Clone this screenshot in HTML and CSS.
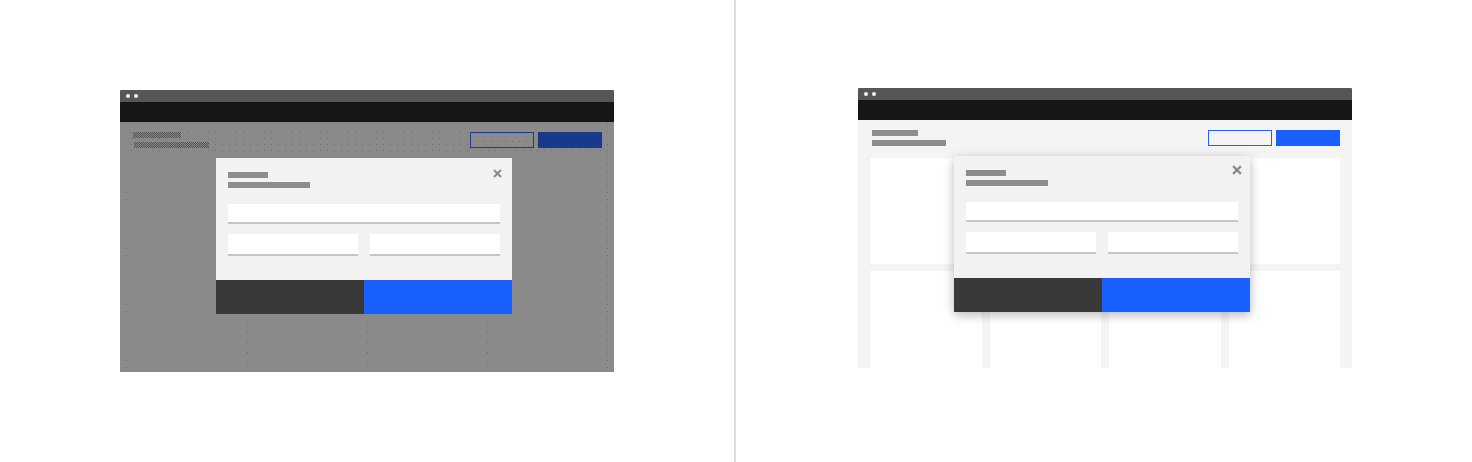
FILE: index.html
```html
<!DOCTYPE html>
<html lang="en">
<head>
<meta charset="utf-8">
<title>Modal states</title>
<link rel="stylesheet" href="styles.css">
</head>
<body>
<div class="stage">
  <section class="panel panel-left">
    <div class="frame">
      <div class="titlebar"><span class="dot"></span><span class="dot"></span></div>
      <div class="navbar"></div>
      <div class="content content-dim">
        <div class="page-head head-dim">
          <div class="titles titles-dim"><span class="bar bar-a"></span><span class="bar bar-b"></span></div>
          <div class="actions"><span class="btn btn-ghost-dim"></span><span class="btn btn-primary-dim"></span></div>
        </div>
      </div>
      <div class="modal">
        <div class="modal-body">
          <div class="titles"><span class="bar bar-c"></span><span class="bar bar-d"></span></div>
          <svg class="close" viewBox="0 0 9 9" aria-hidden="true"><path d="M1 1L8 8M8 1L1 8"/></svg>
          <div class="fields">
            <div class="field"></div>
            <div class="field-row"><div class="field"></div><div class="field"></div></div>
          </div>
        </div>
        <div class="modal-foot"><span class="btn-secondary"></span><span class="btn-submit"></span></div>
      </div>
    </div>
  </section>
  <div class="divider"></div>
  <section class="panel panel-right">
    <div class="frame">
      <div class="titlebar"><span class="dot"></span><span class="dot"></span></div>
      <div class="navbar"></div>
      <div class="content content-live">
        <div class="page-head">
          <div class="titles titles-live"><span class="bar bar-a"></span><span class="bar bar-b"></span></div>
          <div class="actions"><span class="btn btn-ghost"></span><span class="btn btn-primary"></span></div>
        </div>
        <div class="cards">
          <div class="card card-wide"></div>
          <div class="card card-wide"></div>
          <div class="card"></div>
          <div class="card"></div>
          <div class="card"></div>
          <div class="card"></div>
        </div>
      </div>
      <div class="modal modal-raised">
        <div class="modal-body">
          <div class="titles"><span class="bar bar-c"></span><span class="bar bar-d"></span></div>
          <svg class="close close-raised" viewBox="0 0 9 9" aria-hidden="true"><path d="M1 1L8 8M8 1L1 8"/></svg>
          <div class="fields">
            <div class="field"></div>
            <div class="field-row"><div class="field"></div><div class="field"></div></div>
          </div>
        </div>
        <div class="modal-foot"><span class="btn-secondary"></span><span class="btn-submit"></span></div>
      </div>
    </div>
  </section>
</div>
</body>
</html>
```
FILE: styles.css
```css
* { box-sizing: border-box; margin: 0; padding: 0; }
html, body { background: #ffffff; }
body {
  width: 1472px;
  height: 462px;
  overflow: hidden;
  font-family: "Liberation Sans", Arial, sans-serif;
}
.stage { display: flex; height: 462px; }
.panel-left { width: 734px; padding: 90px 0 0 120px; }
.divider { width: 2px; height: 462px; background: #dddddd; }
.panel-right { flex: 1; padding: 88px 0 0 122px; }

.frame { position: relative; width: 494px; }
.titlebar {
  height: 12px;
  background: #565656;
  display: flex;
  align-items: center;
  gap: 4px;
  padding-left: 6px;
  border-radius: 1px 1px 0 0;
}
.dot { width: 4px; height: 4px; border-radius: 50%; background: #f2f2f2; }
.navbar { height: 20px; background: #161616; }

.content { overflow: hidden; }
.content-live { height: 248px; background: #f4f4f4; padding: 10px 12px 0; }
.content-dim {
  height: 250px;
  padding: 5px 4px 0 5px;
  background-color: #8a8a8a;
  background-image:
    repeating-linear-gradient(to bottom, #6c6c6c 0 1px, transparent 1px 7px),
    repeating-linear-gradient(to bottom, #6c6c6c 0 1px, transparent 1px 7px),
    repeating-linear-gradient(to bottom, #6c6c6c 0 1px, transparent 1px 10px),
    repeating-linear-gradient(to bottom, #6c6c6c 0 1px, transparent 1px 10px),
    repeating-linear-gradient(to bottom, #6c6c6c 0 1px, transparent 1px 10px);
  background-size: 1px 100%;
  background-repeat: no-repeat;
  background-position: 6px 0, 487px 0, 127px 200px, 247px 200px, 367px 200px;
}

.page-head { display: flex; justify-content: space-between; align-items: flex-start; }
.head-dim {
  height: 29px;
  padding: 5px 8px;
  background-color: #6e6e6e;
  background-image:
    linear-gradient(90deg, #8a8a8a 6px, transparent 6px),
    linear-gradient(#8a8a8a 5px, transparent 5px);
  background-size: 7px 6px, 7px 6px;
}

.titles { display: flex; flex-direction: column; gap: 4px; }
.titles-live { padding-left: 2px; }
.bar { display: block; height: 6px; background: #8d8d8d; }
.bar-a { width: 46px; }
.bar-b { width: 74px; }
.bar-c { width: 40px; }
.bar-d { width: 82px; }
.titles-dim .bar {
  height: 6px;
  background-color: #8a8a8a;
  background-image: repeating-conic-gradient(#505050 0 25%, transparent 0 50%);
  background-size: 2px 2px;
}
.titles-dim .bar-a { width: 48px; }
.titles-dim .bar-b { width: 75px; margin-left: 1px; }

.actions { display: flex; gap: 4px; }
.btn { display: block; width: 64px; height: 16px; }
.btn-ghost { border: 1px solid #1f62fb; background: #f4f4f4; }
.btn-primary { background: #1a5fff; }
.btn-ghost-dim {
  border: 1px solid #1d3a8c;
  background-color: #8a8a8a;
  background-image: repeating-linear-gradient(90deg, #666666 0 1px, transparent 1px 7px);
  background-size: 50px 1px;
  background-position: 6px 8px;
  background-repeat: no-repeat;
}
.btn-primary-dim { background: #193a8a; }

.cards {
  margin-top: 12px;
  display: grid;
  grid-template-columns: repeat(4, 1fr);
  grid-auto-rows: 106px;
  gap: 7px 8px;
}
.card { background: #ffffff; }
.card-wide { grid-column: span 2; }

.modal {
  position: absolute;
  left: 96px;
  top: 68px;
  width: 296px;
  background: #f2f2f2;
}
.modal-raised { box-shadow: 0 3px 10px rgba(0, 0, 0, 0.28); }
.modal-body { position: relative; padding: 14px 12px 24px; }
.close {
  position: absolute;
  top: 11px;
  right: 10px;
  width: 9px;
  height: 9px;
  fill: none;
  stroke: #8a8a8a;
  stroke-width: 2;
}
.close-raised { top: 9px; right: 8px; width: 10px; height: 10px; }
.fields { margin-top: 16px; display: flex; flex-direction: column; gap: 10px; }
.field { height: 20px; background: #ffffff; border-bottom: 2px solid #c6c6c6; }
.field-row { display: flex; gap: 12px; }
.field-row .field { flex: 1; height: 22px; }
.modal-foot { display: flex; height: 34px; }
.btn-secondary { flex: 1; background: #393939; }
.btn-submit { flex: 1; background: #1a5fff; }
```
